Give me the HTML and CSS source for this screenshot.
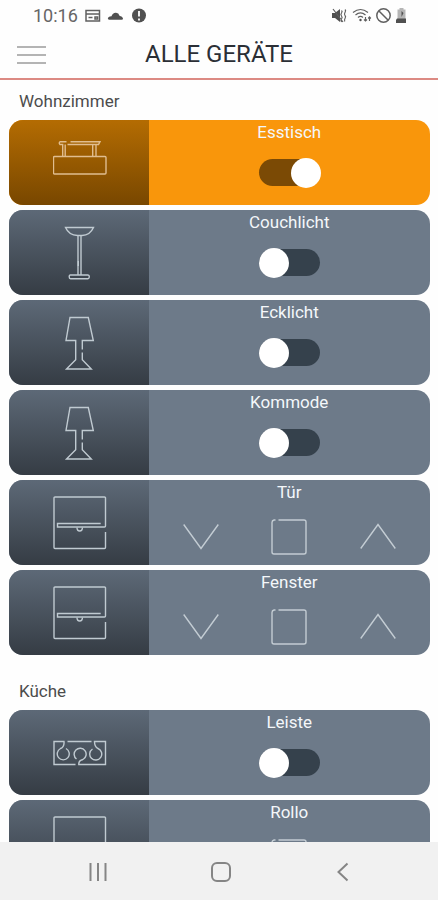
FILE: index.html
```html
<!DOCTYPE html>
<html lang="de">
<head>
  <meta charset="UTF-8">
  <meta name="viewport" content="width=device-width, initial-scale=1.0">
  <title>Alle Geräte</title>
  <link rel="stylesheet" href="styles.css">
</head>
<body>

  <!-- Shared icons -->
  <svg class="sprite">
    <symbol id="table" viewBox="0 0 54 56">
      <path d="M1.5 21.5H52q1 0 1 1V38q0 1-1 1H1.5q-1 0-1-1V22.5q0-1 1-1z"/>
      <path d="M9.7 21V9.5H7Q5.5 8 7 6.7H13.5M17.5 6.7H47L45.5 9.5H14.5M12.2 21V9.5M39.7 21V9.5M43 21V9.5"/>
    </symbol>
    <symbol id="floorlamp" viewBox="0 0 54 56">
      <path d="M12.5 2.5H40.500Q37 10.300 29 10.500H24.500Q16 10.300 12.500 2.500zM25 10.500V50M28 10.500V50M17.500 50H35q1.300 0 1.300 1.800T35 53.700H17.500q-1.300 0-1.300-1.900T17.500 50z"/>
      <path class="switch-mark" d="M25.300 36v5"/>
    </symbol>
    <symbol id="lamp" viewBox="0 0 54 56">
      <path d="M29.300 34.500V25.500H40.300L35.300 2.500H17L13 25.500H22.700V44.700L13.500 54H38.300L29.300 44.700V37.500"/>
    </symbol>
    <symbol id="blind" viewBox="0 0 54 56">
      <path d="M47.700 28.500H4.500V32H51.500Q52.500 32 52.500 31V3Q52.500 2 51.500 2H2Q1 2 1 3V52.500Q1 53.500 2 53.500H51.500Q52.500 53.500 52.500 52.500V37"/>
      <path d="M24 32.500q0 3.500 2.700 3.500t2.700-3.500"/>
    </symbol>
    <symbol id="strip" viewBox="0 0 54 56">
      <path d="M14.500 16.500H38.500M13 23.500A6 6 0 1 1 7.500 23.500Q11.500 22 11 16.500H1V39.500H22.500M30 34.500A6 6 0 1 0 23.500 34M30 34.500Q25.500 35.500 25.800 39.500H52.500V16.500H41.500Q41.500 22 45 23.500A6 6 0 1 1 39.500 24"/>
    </symbol>
    <symbol id="down" viewBox="0 0 36 36"><path d="M.7 5.500L18 29.500L35.300 5.500"/></symbol>
    <symbol id="stop" viewBox="0 0 36 36"><path d="M4.500 1H3Q1 1.500 1 3.500V33Q1 35 3 35H33Q35 35 35 33V3Q35 1 33 1H7.500"/></symbol>
    <symbol id="up" viewBox="0 0 36 36"><path d="M.7 29.500L18 5.500L35.300 29.500"/></symbol>
  </svg>

  <div class="statusbar">
    <span class="time">10:16</span>
    <svg class="status-left" width="62" height="16" viewBox="0 0 62 16">
      <path class="line" d="M2 2.500h13.500v10.500H2zM2 6h13.500M4.500 9.500h4M11 9h2.500v2h-2.500z"/>
      <path class="fill" d="M25 11.700q-2-1-.5-2.500 1-.8 3-1 1.200-3.700 4.500-3.500 2.800.2 3.500 3 3 .5 3.500 2.500.2 1.500-1.500 1.500z"/>
      <circle class="fill" cx="55" cy="7.500" r="7"/>
      <path class="mark" d="M55 3v5.500M55 10.500v2"/>
    </svg>
    <svg class="status-right" width="76" height="18" viewBox="0 0 76 18">
      <path class="fill" d="M1 6h3l5-4v13l-5-4H1z"/>
      <path class="thin" d="M2 2l10 13M10.500 3.500q1.200 1 0 2.500t0 3 0 3 0 3M14 2.500q1.200 1 0 3t0 3 0 3 0 3"/>
      <path class="thin" d="M22 5.500q7.500-6 15 0M24.500 8q5-4.200 10 0M27 10.500q2.500-2.200 5 0M34.500 10v4m-1.500-1.500l1.500 1.500 1.500-1.500M38.500 14v-4m-1.300 1.500l1.300-1.500 1.300 1.500"/>
      <circle class="fill" cx="29.500" cy="13" r="1.200"/>
      <circle class="line" cx="52.500" cy="8.500" r="6.700"/>
      <path class="line" d="M48 4l9 9"/>
      <path class="battery" d="M66.500 2.500h2V1h4v1.500h2V12h-8z"/>
      <path class="fill" d="M66 11.500h9v4.500h-10v-3zM70.500 4v6l2-4z"/>
    </svg>
  </div>

  <header class="header">
    <div class="menu"><span></span><span></span><span></span></div>
    <h1>ALLE GERÄTE</h1>
  </header>

  <main class="devices">
    <section class="room">
      <h2>Wohnzimmer</h2>
      <div class="card on">
        <div class="symbol"><svg><use href="#table"/></svg></div>
        <div class="control">
          <h3>Esstisch</h3>
          <div class="toggle"><span class="knob"></span></div>
        </div>
      </div>
      <div class="card">
        <div class="symbol"><svg><use href="#floorlamp"/></svg></div>
        <div class="control">
          <h3>Couchlicht</h3>
          <div class="toggle"><span class="knob"></span></div>
        </div>
      </div>
      <div class="card">
        <div class="symbol"><svg><use href="#lamp"/></svg></div>
        <div class="control">
          <h3>Ecklicht</h3>
          <div class="toggle"><span class="knob"></span></div>
        </div>
      </div>
      <div class="card">
        <div class="symbol"><svg><use href="#lamp"/></svg></div>
        <div class="control">
          <h3>Kommode</h3>
          <div class="toggle"><span class="knob"></span></div>
        </div>
      </div>
      <div class="card">
        <div class="symbol"><svg><use href="#blind"/></svg></div>
        <div class="control">
          <h3>Tür</h3>
          <div class="buttons">
            <svg><use href="#down"/></svg>
            <svg><use href="#stop"/></svg>
            <svg><use href="#up"/></svg>
          </div>
        </div>
      </div>
      <div class="card">
        <div class="symbol"><svg><use href="#blind"/></svg></div>
        <div class="control">
          <h3>Fenster</h3>
          <div class="buttons">
            <svg><use href="#down"/></svg>
            <svg><use href="#stop"/></svg>
            <svg><use href="#up"/></svg>
          </div>
        </div>
      </div>
    </section>

    <section class="room">
      <h2>Küche</h2>
      <div class="card">
        <div class="symbol"><svg><use href="#strip"/></svg></div>
        <div class="control">
          <h3>Leiste</h3>
          <div class="toggle"><span class="knob"></span></div>
        </div>
      </div>
      <div class="card">
        <div class="symbol"><svg><use href="#blind"/></svg></div>
        <div class="control">
          <h3>Rollo</h3>
          <div class="buttons">
            <svg><use href="#down"/></svg>
            <svg><use href="#stop"/></svg>
            <svg><use href="#up"/></svg>
          </div>
        </div>
      </div>
    </section>
  </main>

  <nav class="navbar">
    <svg viewBox="0 0 22 22"><path d="M3.500 2v18M11 2v18M18.500 2v18"/></svg>
    <svg viewBox="0 0 22 22"><rect x="2" y="2" width="18" height="18" rx="5"/></svg>
    <svg viewBox="0 0 22 22"><path d="M15.500 2.500L6.500 11l9 8.500"/></svg>
  </nav>

</body>
</html>
```

FILE: styles.css
```css
* {
  box-sizing: border-box;
}

body {
  font-family: Roboto, "Liberation Sans", sans-serif;
  background-color: #fefefe;
  display: flex;
  flex-direction: column;
  height: 900px;
  margin: 0;
  overflow: hidden;
}

h1, h2, h3 {
  margin: 0;
  font-weight: normal;
}

svg {
  display: block;
  fill: none;
}

.sprite {
  display: none;
}

/* Status bar */
.statusbar {
  display: flex;
  align-items: center;
  flex: none;
  height: 31px;
  padding: 0 31px 0 33px;
  color: #666;
}

.time {
  width: 51px;
  font-size: 18px;
}

.status-right {
  margin-left: auto;
}

.statusbar .line {
  stroke: #606060;
  stroke-width: 1.5;
}

.statusbar .thin {
  stroke: #606060;
  stroke-width: 1.2;
}

.statusbar .fill {
  fill: #505050;
}

.statusbar .mark {
  stroke: #fff;
  stroke-width: 1.8;
}

.statusbar .battery {
  fill: #b5b5b5;
}

/* Header */
.header {
  display: grid;
  grid-template-columns: 48px 1fr 48px;
  align-items: center;
  flex: none;
  height: 49px;
  border-bottom: 2px solid #dc8a83;
}

.header h1 {
  padding-bottom: 1px;
  font-size: 24px;
  text-align: center;
  color: #2b2f36;
}

.menu {
  display: flex;
  flex-direction: column;
  gap: 6px;
  padding-left: 17px;
}

.menu span {
  width: 29px;
  height: 2px;
  background-color: #b4b4b4;
}

/* Device list */
.devices {
  flex: 1;
  min-height: 0;
  overflow: hidden;
  padding: 0 8.5px 0 9px;
}

.room {
  margin-bottom: 15px;
}

.room h2 {
  height: 40px;
  padding-left: 10px;
  font-size: 17px;
  line-height: 42px;
  color: #4c4c4c;
}

.card {
  display: flex;
  height: 85px;
  margin-bottom: 5px;
  border-radius: 14px;
  overflow: hidden;
  background-color: #6d7a89;
}

.room .card:last-child {
  margin-bottom: 0;
}

.symbol {
  width: 140px;
  padding: 15px 0 0 44px;
  background: linear-gradient(#5d6977, #353c44);
}

.symbol svg {
  width: 54px;
  height: 56px;
  stroke: #c0cad1;
  stroke-width: 1.4;
}

.symbol .switch-mark {
  stroke: #20262c;
  stroke-width: 2;
}

.control {
  flex: 1;
  display: flex;
  flex-direction: column;
  align-items: center;
}

.control h3 {
  height: 39px;
  font-size: 17px;
  line-height: 24px;
  color: #f4f7fa;
}

.toggle {
  display: flex;
  align-items: center;
  width: 61px;
  height: 27px;
  background-color: #35414c;
  border-radius: 14px;
}

.knob {
  flex: none;
  width: 30px;
  height: 30px;
  border-radius: 50%;
  background-color: #fff;
}

.buttons {
  display: flex;
  gap: 52.5px;
}

.buttons svg {
  width: 36px;
  height: 36px;
  stroke: #c3ccd3;
  stroke-width: 1.4;
}

.card.on {
  background-color: #f9960b;
}

.on .symbol {
  background: linear-gradient(#b46c02, #784700);
}

.on .symbol svg {
  stroke: #e0bd90;
}

.on .toggle {
  justify-content: flex-end;
  background-color: #7b4a05;
}

.on .knob {
  margin-right: -1px;
}

/* Android navigation */
.navbar {
  display: flex;
  justify-content: space-between;
  align-items: center;
  flex: none;
  height: 58px;
  padding: 2px 84px 0 87px;
  background-color: #f1f1f1;
}

.navbar svg {
  width: 22px;
  height: 22px;
  stroke: #858585;
  stroke-width: 2;
}
```
